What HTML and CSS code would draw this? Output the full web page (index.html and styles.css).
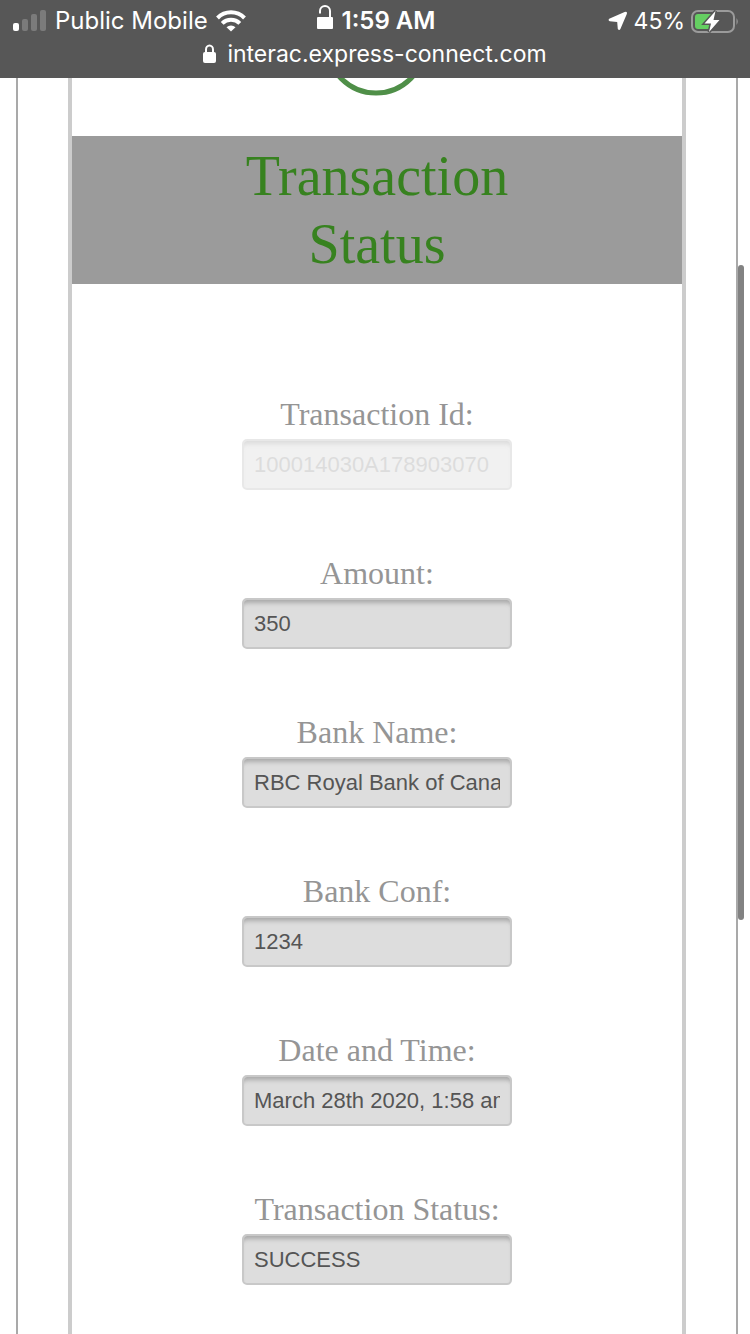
FILE: index.html
```html
<!DOCTYPE html>
<html lang="en">
<head>
    <meta charset="UTF-8">
    <meta name="viewport" content="width=device-width, initial-scale=1.0">
    <title>Transaction Status</title>
    <link rel="stylesheet" href="styles.css">
</head>
<body>
    <header class="top-bar">
        <div class="status-row">
            <div class="status-left">
                <svg class="signal" width="34" height="22" viewBox="0 0 34 22">
                    <rect x="0" y="13" width="6" height="8" rx="2" fill="#fff"/>
                    <rect x="9" y="9" width="6" height="12" rx="2" fill="#7b7b7b"/>
                    <rect x="18" y="4" width="6" height="17" rx="2" fill="#7b7b7b"/>
                    <rect x="27" y="0" width="6" height="21" rx="2" fill="#7b7b7b"/>
                </svg>
                <span class="carrier">Public Mobile</span>
                <svg width="30" height="22" viewBox="0 0 30 22" fill="none" stroke="#fff" stroke-width="4">
                    <path d="M1.500 8 A19 19 0 0 1 28.500 8" />
                    <path d="M6.200 13.300 A12.500 12.500 0 0 1 23.800 13.300" />
                    <path d="M15 21.500 L10.500 17.200 A6.500 6.500 0 0 1 19.500 17.200 Z" fill="#fff" stroke="none"/>
                </svg>
            </div>
            <div class="clock">
                <svg width="17" height="25" viewBox="0 0 17 25">
                    <path d="M3 8.500 V6 A5 5 0 0 1 13 6 V13" fill="none" stroke="#fff" stroke-width="2"/>
                    <rect x="0" y="12" width="16" height="12" rx="1" fill="#fff"/>
                </svg>
                <span>1:59 AM</span>
            </div>
            <div class="status-right">
                <svg width="20" height="20" viewBox="0 0 20 20">
                    <path d="M18.800 1.200 Q19.200 2.200 18.700 3.200 L12.400 18 Q11.200 20 9.800 18 L9.200 10.900 L1.800 10.200 Q-0.200 9.200 1.200 7.800 L16.600 1 Q18.400 0.300 18.800 1.200 Z" fill="#fff"/>
                </svg>
                <span class="percent">45%</span>
                <svg class="battery" width="48" height="24" viewBox="0 0 48 24">
                    <rect x="1" y="2" width="42" height="21" rx="6" fill="none" stroke="#9b9b9b" stroke-width="2"/>
                    <path d="M45.500 9 Q48 12.500 45.500 16 Z" fill="#9b9b9b"/>
                    <path d="M7 5 H20 V20 H7 Q4 20 4 17 V8 Q4 5 7 5 Z" fill="#65cf62"/>
                    <path d="M24.500 2 L13.500 14.500 H20 L18 23 L28.500 11 H22.500 Z" fill="#fff" stroke="#575757" stroke-width="3" paint-order="stroke"/>
                </svg>
            </div>
        </div>
        <div class="address">
            <svg width="14" height="20" viewBox="0 0 14 20">
                <path d="M3 9 V5.500 A3.500 4 0 0 1 10 5.500 V9" fill="none" stroke="#fff" stroke-width="2"/>
                <rect x="0" y="8" width="13" height="11" rx="2" fill="#fff"/>
            </svg>
            <span>interac.express-connect.com</span>
        </div>
    </header>

    <main class="page">
        <div class="panel">
            <div class="logo">
                <svg width="104" height="18" viewBox="0 86 104 18">
                    <circle cx="51" cy="52" r="49" fill="none" stroke="#4f8f48" stroke-width="5"/>
                </svg>
            </div>

            <h1>Transaction Status</h1>

            <form class="details">
                <div class="field">
                    <label for="transactionId">Transaction Id:</label>
                    <input type="text" id="transactionId" value="100014030A178903070" disabled>
                </div>
                <div class="field">
                    <label for="amount">Amount:</label>
                    <input type="text" id="amount" value="350" readonly>
                </div>
                <div class="field">
                    <label for="bankName">Bank Name:</label>
                    <input type="text" id="bankName" value="RBC Royal Bank of Canada" readonly>
                </div>
                <div class="field">
                    <label for="bankConf">Bank Conf:</label>
                    <input type="text" id="bankConf" value="1234" readonly>
                </div>
                <div class="field">
                    <label for="dateTime">Date and Time:</label>
                    <input type="text" id="dateTime" value="March 28th 2020, 1:58 am" readonly>
                </div>
                <div class="field">
                    <label for="status">Transaction Status:</label>
                    <input type="text" id="status" value="SUCCESS" readonly>
                </div>
            </form>
        </div>
    </main>

    <div class="scroll-thumb"></div>
</body>
</html>
```
FILE: styles.css
```css
* {
    box-sizing: border-box;
}

body {
    display: flex;
    flex-direction: column;
    position: relative;
    min-height: 100vh;
    margin: 0;
    background: #fff;
    font-family: "Liberation Serif", "Times New Roman", serif;
}

svg {
    display: block;
    flex-shrink: 0;
}

/* Phone status bar and address */
.top-bar {
    height: 78px;
    background: #575757;
    color: #fff;
    font-family: Inter, "Liberation Sans", sans-serif;
    font-size: 23px;
}

.status-row {
    display: grid;
    grid-template-columns: 1fr auto 1fr;
    align-items: center;
    height: 41px;
    padding: 0 11px 0 13px;
}

.status-left,
.clock,
.status-right,
.address {
    display: flex;
    align-items: center;
    gap: 8px;
}

.clock {
    font-size: 24px;
    font-weight: 600;
}

.clock svg {
    margin-bottom: 6px;
}

.status-left {
    font-size: 24px;
}

.status-right {
    justify-content: flex-end;
    gap: 6px;
}

.address {
    justify-content: center;
    gap: 10px;
    height: 26px;
}

/* Page frame */
.page {
    flex: 1;
    display: flex;
    margin: 0 12px 0 16px;
    padding: 0 50px;
    border: solid #a9a9a9;
    border-width: 0 2px;
}

.panel {
    flex: 1;
    border: solid #ccc;
    border-width: 0 4px;
}

.logo {
    display: flex;
    justify-content: center;
    height: 58px;
}

h1 {
    margin: 0;
    padding: 6px 150px;
    background: #9b9b9b;
    color: #37821f;
    font-size: 56px;
    font-weight: 400;
    line-height: 68px;
    text-align: center;
}

.details {
    display: flex;
    flex-direction: column;
    align-items: center;
    gap: 65px;
    padding-top: 112px;
}

.field {
    display: flex;
    flex-direction: column;
    align-items: center;
    gap: 7px;
}

label {
    color: #959595;
    font-size: 32px;
    line-height: 36px;
}

input {
    width: 270px;
    height: 51px;
    padding: 0 10px;
    border: 2px solid #c8c8c8;
    border-radius: 5px;
    background: #ddd;
    box-shadow: inset 0 6px 4px -3px #aaa;
    color: #555;
    font-family: "Liberation Sans", Arial, sans-serif;
    font-size: 22px;
}

input:disabled {
    opacity: 0.4;
    color: #aaa;
}

.scroll-thumb {
    position: absolute;
    top: 265px;
    right: 6px;
    width: 6px;
    height: 655px;
    border-radius: 3px;
    background: #828282;
}
```
